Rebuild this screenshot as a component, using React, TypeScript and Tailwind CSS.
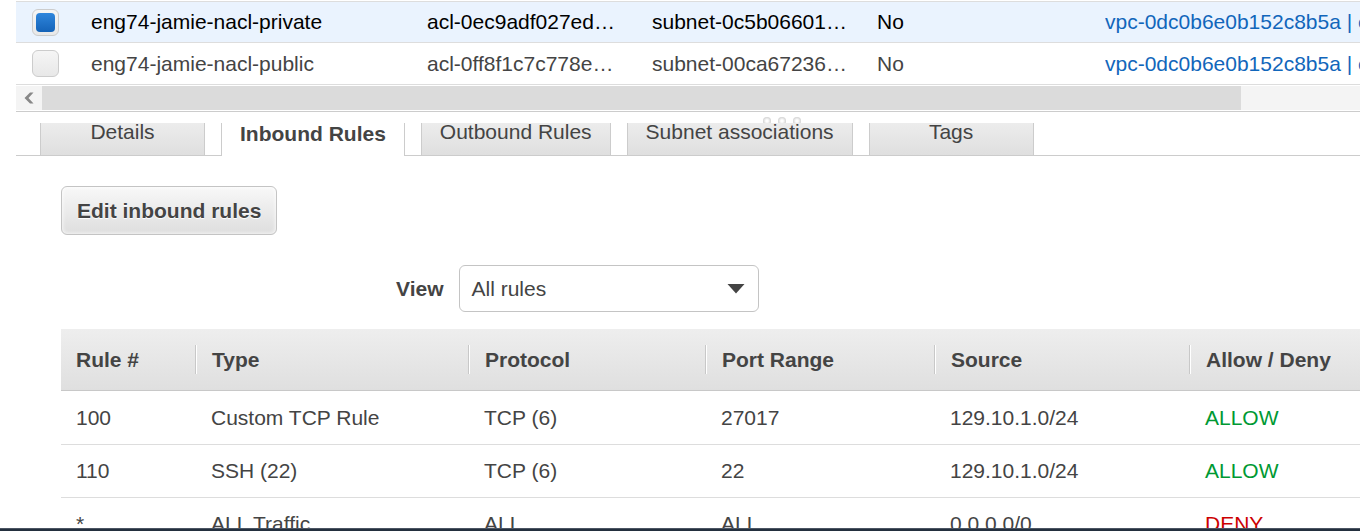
import React, { useState } from "react";

type Acl = { name: string; id: string; subnet: string; isDefault: string; vpc: string };
type Rule = { num: string; type: string; protocol: string; ports: string; source: string; action: "ALLOW" | "DENY" };

const acls: Acl[] = [
  { name: "eng74-jamie-nacl-private", id: "acl-0ec9adf027ed…", subnet: "subnet-0c5b06601…", isDefault: "No", vpc: "vpc-0dc0b6e0b152c8b5a | eng74" },
  { name: "eng74-jamie-nacl-public", id: "acl-0ff8f1c7c778e…", subnet: "subnet-00ca67236…", isDefault: "No", vpc: "vpc-0dc0b6e0b152c8b5a | eng74" },
];

const rules: Rule[] = [
  { num: "100", type: "Custom TCP Rule", protocol: "TCP (6)", ports: "27017", source: "129.10.1.0/24", action: "ALLOW" },
  { num: "110", type: "SSH (22)", protocol: "TCP (6)", ports: "22", source: "129.10.1.0/24", action: "ALLOW" },
  { num: "*", type: "ALL Traffic", protocol: "ALL", ports: "ALL", source: "0.0.0.0/0", action: "DENY" },
];

const tabs = ["Details", "Inbound Rules", "Outbound Rules", "Subnet associations", "Tags"];
const headings = ["Rule #", "Type", "Protocol", "Port Range", "Source", "Allow / Deny"];

function AclTable() {
  const [selected, setSelected] = useState(0);
  return (
    <table className="w-full table-fixed border-separate border-spacing-0 whitespace-nowrap text-left">
      <colgroup>
        <col className="w-[75px]" />
        <col className="w-[336px]" />
        <col className="w-[225px]" />
        <col className="w-[225px]" />
        <col className="w-[228px]" />
        <col />
      </colgroup>
      <tbody>
        {acls.map((acl, i) => (
          <tr
            key={acl.name}
            className={
              i === selected
                ? "h-[42px] bg-[#eaf3fe] text-black *:border-b *:border-[#dddddd] *:p-0 first:*:border-t"
                : "h-[42px] bg-white *:border-b *:border-[#dddddd] *:p-0 first:*:border-t"
            }
          >
            <td>
              <input
                type="checkbox"
                aria-label={acl.name}
                checked={i === selected}
                onChange={() => setSelected(i)}
                className="ml-4 block size-[27px] appearance-none rounded-md border border-[#cccccc] bg-linear-to-b from-[#f5f5f5] to-[#e8e8e8] p-[3px] before:block before:size-full before:rounded before:content-[''] checked:before:bg-linear-to-b checked:before:from-[#2f86dc] checked:before:to-[#1463b8]"
              />
            </td>
            <td>{acl.name}</td>
            <td>{acl.id}</td>
            <td>{acl.subnet}</td>
            <td>{acl.isDefault}</td>
            <td className="overflow-hidden">
              <a href="#vpc" className="text-[#1166bb]">{acl.vpc}</a>
            </td>
          </tr>
        ))}
      </tbody>
    </table>
  );
}

function ScrollBar() {
  return (
    <div className="my-px flex h-[24px] bg-[#f4f4f4]">
      <button type="button" aria-label="Scroll left" className="flex w-[26px] shrink-0 items-center justify-center">
        <svg width="10" height="12" viewBox="0 0 10 12" fill="#888888">
          <path d="M6 0.5 H9.5 L4.5 6 L9.5 11.5 H6 L0.5 6 Z" />
        </svg>
      </button>
      <div className="flex flex-1">
        <div className="w-[91%] bg-[#dbdbdb]" />
      </div>
    </div>
  );
}

function Grip() {
  return (
    <div className="flex h-[12px] items-end gap-[7px] overflow-hidden border-t border-[#cccccc] pl-[747px]">
      {[0, 1, 2].map((n) => (
        <span key={n} className="-mb-0.5 size-2 shrink-0 rounded-full bg-[#d4d4d4] bg-radial from-white from-20% to-[#cfcfcf] to-75%" />
      ))}
    </div>
  );
}

function Tabs() {
  const [active, setActive] = useState(1);
  return (
    <div role="tablist" className="flex h-[33px] items-end overflow-hidden">
      <span className="w-6 self-stretch border-b border-[#cccccc]" />
      {tabs.map((tab, i) => (
        <React.Fragment key={tab}>
          {i > 0 && <span className="w-4 self-stretch border-b border-[#cccccc]" />}
          <button
            type="button"
            role="tab"
            aria-selected={i === active}
            onClick={() => setActive(i)}
            className={
              i === active
                ? "h-[44px] min-w-[165px] shrink-0 border-x border-[#cccccc] bg-white px-[18px] font-bold"
                : "h-[48px] min-w-[165px] shrink-0 border border-[#cccccc] bg-linear-to-b from-[#f2f2f2] to-[#dfdfdf] px-[18px]"
            }
          >
            {tab}
          </button>
        </React.Fragment>
      ))}
      <span className="flex-1 self-stretch border-b border-[#cccccc]" />
    </div>
  );
}

function RuleTable() {
  return (
    <table className="w-full table-fixed border-separate border-spacing-0 whitespace-nowrap text-left">
      <colgroup>
        <col className="w-[135px]" />
        <col className="w-[273px]" />
        <col className="w-[237px]" />
        <col className="w-[229px]" />
        <col className="w-[255px]" />
        <col />
      </colgroup>
      <thead>
        <tr className="h-[62px] bg-linear-to-b from-[#eeeeee] to-[#dfdfdf]">
          {headings.map((h) => (
            <th key={h} className="group border-b border-[#c8c8c8] p-0 font-bold">
              <div className="flex h-[29px] items-center border-r border-l border-r-[#c8c8c8] border-l-white pl-[15px] group-first:border-l-0 group-last:border-r-0">
                {h}
              </div>
            </th>
          ))}
        </tr>
      </thead>
      <tbody>
        {rules.map((r) => (
          <tr
            key={r.num}
            className="h-[53px] *:border-[#dddddd] *:p-0 *:pl-[15px] not-first:*:border-t"
          >
            <td>{r.num}</td>
            <td>{r.type}</td>
            <td>{r.protocol}</td>
            <td>{r.ports}</td>
            <td>{r.source}</td>
            <td className={r.action === "ALLOW" ? "text-[#009933]" : "text-[#cc0000]"}>{r.action}</td>
          </tr>
        ))}
      </tbody>
    </table>
  );
}

export default function App() {
  return (
    <div className="flex h-screen flex-col overflow-hidden bg-white font-['Liberation_Sans',Arial,sans-serif] text-[21px] leading-6 text-[#444444]">
      <div className="min-h-0 flex-1 overflow-hidden pt-px pl-4">
        <AclTable />
        <ScrollBar />
        <Grip />
        <Tabs />
        <main className="pt-[30px] pl-[45px]">
          <button
            type="button"
            className="block h-[49px] rounded-md border border-[#c4c4c4] bg-linear-to-b from-[#f8f8f8] to-[#dedede] px-[15px] font-bold shadow-[inset_0_0_4px_#ffffff] text-shadow-[0_1px_1px_#ffffff]"
          >
            Edit inbound rules
          </button>
          <div className="mt-[30px] mb-[17px] flex items-center gap-4 pl-[335px]">
            <label htmlFor="view" className="font-bold">View</label>
            <div className="relative w-[300px]">
              <select
                id="view"
                className="block h-[47px] w-full appearance-none rounded-md border border-[#c4c4c4] bg-white px-[11px]"
              >
                <option>All rules</option>
              </select>
              <svg className="pointer-events-none absolute top-[19px] right-[14px]" width="18" height="10" viewBox="0 0 18 10" fill="#444444">
                <path d="M0.5 0 H17.5 L9 9.5 Z" />
              </svg>
            </div>
          </div>
          <RuleTable />
        </main>
      </div>
      <footer className="h-[3px] shrink-0 border-t border-[#4b5563] bg-[#232f3e]" />
    </div>
  );
}
